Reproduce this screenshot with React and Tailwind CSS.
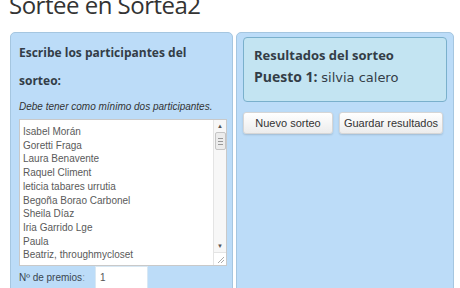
import { useState } from "react";

const participants = [
  "Isabel Morán",
  "Goretti Fraga",
  "Laura Benavente",
  "Raquel Climent",
  "leticia tabares urrutia",
  "Begoña Borao Carbonel",
  "Sheila Díaz",
  "Iria Garrido Lge",
  "Paula",
  "Beatriz, throughmycloset",
];

function Scrollbar() {
  return (
    <div className="flex w-[13px] flex-col items-center border-l border-[#e4e4e4] bg-[#f7f7f7]">
      <div className="flex h-[12px] w-full items-center justify-center text-[6px] leading-none text-[#555]">
        ▲
      </div>
      <div className="flex h-[18px] w-[11px] flex-col items-center justify-center gap-[2px] rounded-[2px] border border-[#c5c5c5] bg-[#ececec]">
        <div className="h-px w-[5px] bg-[#999]" />
        <div className="h-px w-[5px] bg-[#999]" />
        <div className="h-px w-[5px] bg-[#999]" />
      </div>
      <div className="flex-1" />
      <div className="flex h-[12px] w-full items-center justify-center text-[6px] leading-none text-[#555]">
        ▼
      </div>
      <div className="flex h-[13px] w-full items-end justify-end border-t border-[#e4e4e4] bg-white pb-[1px] pr-[1px]">
        <svg width="8" height="8" viewBox="0 0 8 8">
          <path d="M7 1L1 7M7 4L4 7" stroke="#aaa" strokeWidth="1" />
        </svg>
      </div>
    </div>
  );
}

export default function App() {
  const [premios, setPremios] = useState("1");

  return (
    <div className="h-[288px] w-[460px] overflow-hidden bg-white font-['Liberation_Sans',Arial,sans-serif]">
      <h1 className="-mt-[17px] ml-[9px] h-[49px] font-['Open_Sans',sans-serif] text-[24px] leading-[44px] tracking-[-0.5px] text-[#333]">
        Sortee en Sortea2
      </h1>

      <div className="flex gap-[3px] pl-[10px]">
        {/* participantes */}
        <div className="h-[270px] w-[223px] rounded-[5px] border border-[#a5c6e0] bg-[#bcdcf8] px-[8px]">
          <p className="mt-[6px] font-['Open_Sans',sans-serif] text-[12px] font-bold leading-[28px] text-[#333d47]">
            Escribe los participantes del sorteo:
          </p>
          <p className="mt-[6px] text-[10px] italic leading-[12px] text-[#333]">
            Debe tener como mínimo dos participantes.
          </p>
          <div className="mt-[6px] flex h-[147px] w-[208px] border border-[#c9c9c9] bg-white">
            <div className="flex-1 pl-[3px] pt-[5px] text-[10px] leading-[13.7px] text-[#5a5a5a]">
              {participants.map((p) => (
                <div key={p}>{p}</div>
              ))}
            </div>
            <Scrollbar />
          </div>
          <div className="flex items-center">
            <span className="text-[10px] text-[#3a4650]">
              Nº de premios<span className="text-[#8a9aa8]">:</span>
            </span>
            <input
              value={premios}
              onChange={(e) => setPremios(e.target.value)}
              className="ml-[10px] h-[23px] w-[53px] border border-[#d8e8f4] bg-white px-[4px] text-[10px] text-[#555] outline-none"
            />
          </div>
        </div>

        {/* resultados */}
        <div className="h-[270px] w-[218px] rounded-[5px] border border-[#a5c6e0] bg-[#bcdcf8] px-[6px] pt-[4px]">
          <div className="h-[65px] rounded-[4px] border border-[#7ab0cc] bg-[#c3e4f2] pl-[10px] pt-[7px] font-['Open_Sans',sans-serif] text-[#333d47]">
            <p className="text-[13px] font-bold leading-[20px]">
              Resultados del sorteo
            </p>
            <p className="mt-[1px] text-[14px] leading-[22px]">
              <span className="font-bold">Puesto 1:</span>{" "}
              <span className="font-['DejaVu_Sans',sans-serif] text-[13px]">
                silvia calero
              </span>
            </p>
          </div>
          <div className="mt-[10px] flex gap-[6px]">
            <button className="h-[22px] w-[90px] rounded-[3px] border border-[#d6d6d6] bg-gradient-to-b from-white to-[#ececec] text-[11px] text-[#333] shadow-[0_1px_2px_rgba(0,0,0,0.15)]">
              Nuevo sorteo
            </button>
            <button className="h-[22px] w-[104px] rounded-[3px] border border-[#d6d6d6] bg-gradient-to-b from-white to-[#ececec] text-[11px] text-[#333] shadow-[0_1px_2px_rgba(0,0,0,0.15)]">
              Guardar resultados
            </button>
          </div>
        </div>
      </div>
    </div>
  );
}
